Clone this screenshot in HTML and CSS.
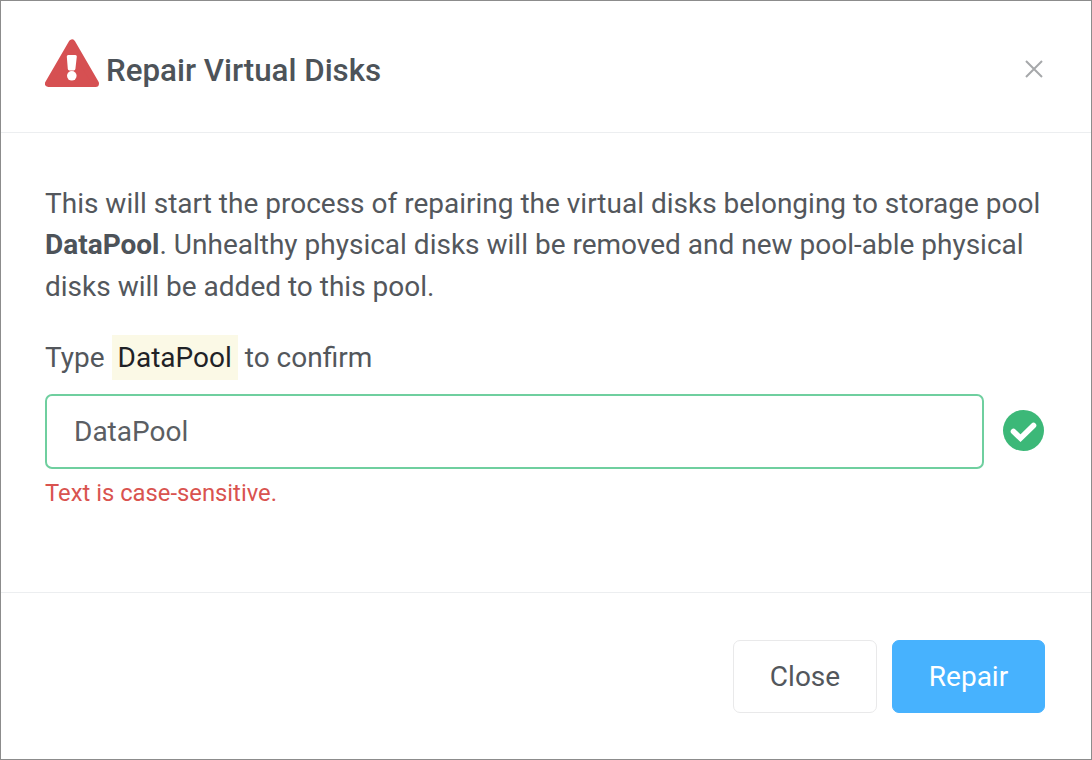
FILE: index.html
```html
<!DOCTYPE html>
<html lang="en">
<head>
<meta charset="utf-8">
<title>Repair Virtual Disks</title>
<link rel="stylesheet" href="styles.css">
</head>
<body>
<div class="dialog">
  <header class="header">
    <div class="title-group">
      <svg class="warn-icon" viewBox="0 0 54 48" aria-hidden="true">
        <path class="warn-shape" d="M27 4 L3.5 44.5 H50.5 Z"/>
        <path class="warn-mark" d="M21.8 17.5 a1.5 1.5 0 0 1 1.5 -1.6 h7 a1.5 1.5 0 0 1 1.5 1.6 l-1.4 12.6 a1.6 1.6 0 0 1 -1.6 1.4 h-4.4 a1.6 1.6 0 0 1 -1.6 -1.4 Z"/>
        <circle class="warn-mark" cx="26.8" cy="36.8" r="4.8"/>
      </svg>
      <h1 class="title">Repair Virtual Disks</h1>
    </div>
    <button class="close-x" aria-label="Close">
      <svg viewBox="0 0 18 18" class="close-icon" aria-hidden="true"><path d="M1 1 L17 17 M17 1 L1 17"/></svg>
    </button>
  </header>
  <main class="content">
    <p class="message">This will start the process of repairing the virtual disks belonging to storage pool <strong>DataPool</strong>. Unhealthy physical disks will be removed and new pool-able physical disks will be added to this pool.</p>
    <div class="confirm-label">
      <span>Type</span><span class="code">DataPool</span><span>to confirm</span>
    </div>
    <div class="input-row">
      <div class="input">DataPool</div>
      <svg class="ok-icon" viewBox="0 0 41 41" aria-hidden="true">
        <circle class="ok-disc" cx="20.5" cy="20.5" r="20.5"/>
        <path class="ok-tick" d="M10.5 21.5 L17.5 28.2 L30.5 15.5"/>
      </svg>
    </div>
    <div class="error">Text is case-sensitive.</div>
  </main>
  <footer class="footer">
    <button class="btn btn-plain">Close</button>
    <button class="btn btn-primary">Repair</button>
  </footer>
</div>
</body>
</html>
```
FILE: styles.css
```css
* { box-sizing: border-box; }
html, body { margin: 0; padding: 0; }
body {
  width: 1092px;
  height: 760px;
  overflow: hidden;
  background: #fff;
  font-family: Roboto, "Liberation Sans", sans-serif;
  color: #53575c;
}
.dialog {
  width: 1092px;
  height: 760px;
  border: 1px solid #8c8c8c;
  display: flex;
  flex-direction: column;
  background: #fff;
}
.header {
  height: 132px;
  flex: none;
  display: flex;
  align-items: center;
  justify-content: space-between;
  padding: 8px 48px 0 44px;
  border-bottom: 1px solid #eceef0;
}
.title-group { display: flex; align-items: center; }
.warn-icon { width: 54px; height: 48px; margin-right: 7px; margin-top: -15px; }
.warn-shape { fill: #d65052; stroke: #d65052; stroke-width: 7; stroke-linejoin: round; }
.warn-mark { fill: #fff; }
.title {
  margin: 0;
  font-size: 31.3px;
  font-weight: 500;
  line-height: 40px;
  color: #4d5359;
}
.close-x { border: 0; background: none; padding: 0; width: 18px; height: 18px; display: block; margin-top: -3px; }
.close-icon { display: block; width: 18px; height: 18px; }
.close-icon path { stroke: #a6a8aa; stroke-width: 2; fill: none; }
.content {
  flex: 1;
  padding: 50px 46px 0 44px;
  border-bottom: 1px solid #eceef0;
}
.message {
  margin: 0;
  font-size: 28px;
  line-height: 41.3px;
  color: #53575c;
}
.message strong { font-weight: 700; color: #4d5359; }
.confirm-label {
  display: flex;
  align-items: center;
  margin-top: 28px;
  font-size: 28px;
  line-height: 45px;
}
.code {
  background: #fbf9e6;
  color: #1f2226;
  padding: 0 6px;
  margin: 0 7px;
}
.input-row {
  display: flex;
  align-items: center;
  margin-top: 14px;
}
.input {
  width: 939px;
  height: 75px;
  border: 2px solid #6fcf9f;
  border-radius: 7px;
  padding: 0 27px;
  font-size: 28px;
  line-height: 71px;
  color: #5b5e63;
}
.ok-icon { width: 41px; height: 41px; margin-left: 19px; margin-top: -2px; }
.ok-disc { fill: #3cb878; }
.ok-tick { fill: none; stroke: #fff; stroke-width: 5.6; stroke-linecap: round; stroke-linejoin: miter; }
.error {
  margin-top: 7px;
  font-size: 23.8px;
  line-height: 34px;
  color: #d9534f;
}
.footer {
  height: 166px;
  flex: none;
  display: flex;
  justify-content: flex-end;
  gap: 15px;
  padding: 47px 46px 0 0;
}
.btn {
  height: 73px;
  font-family: inherit;
  font-size: 28px;
  border-radius: 7px;
  padding: 0;
}
.btn-plain { width: 144px; background: #fff; border: 1.5px solid #e9e9ea; color: #53575c; }
.btn-primary { width: 153px; background: #47b2fe; border: 1px solid #47b2fe; color: #fff; }
```
